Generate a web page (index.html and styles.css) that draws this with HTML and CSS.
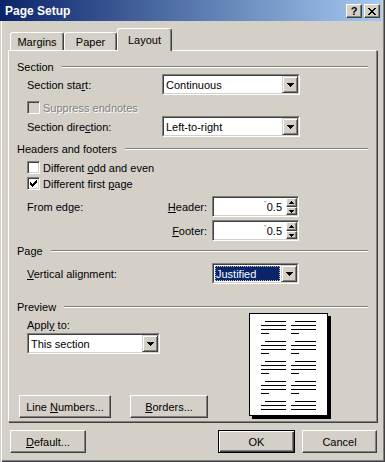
FILE: index.html
```html
<!DOCTYPE html>
<html lang="en">

<head>
    <meta charset="UTF-8">
    <meta name="viewport" content="width=device-width, initial-scale=1.0">
    <title>Page Setup</title>
    <link rel="stylesheet" href="styles.css">
</head>

<body>
    <div class="window">
        <div class="titlebar">
            <span class="title">Page Setup</span>
            <div class="cap-buttons">
                <span class="cap-btn">?</span>
                <span class="cap-btn">
                    <svg width="8" height="7" viewBox="0 0 8 7"><path d="M0 0h2v1H0zM6 0h2v1H6zM1 1h2v1H1zM5 1h2v1H5zM2 2h4v1H2zM3 3h2v1H3zM2 4h4v1H2zM1 5h2v1H1zM5 5h2v1H5zM0 6h2v1H0zM6 6h2v1H6z"/></svg>
                </span>
            </div>
        </div>

        <div class="main">
            <div class="tabs">
                <div class="tab tab-margins">Margins</div>
                <div class="tab tab-paper">Paper</div>
                <div class="tab tab-layout active">Layout</div>
            </div>

            <div class="panel">
                <!-- Section -->
                <div class="group-head"><span>Section</span><i class="etch"></i></div>
                <div class="field first">
                    <span class="lbl">Section sta<u>r</u>t:</span>
                    <div class="combo w138">
                        <div class="combo-in"><span class="val">Continuous</span><span class="drop"><svg width="7" height="4" viewBox="0 0 7 4"><path d="M0 0h7v1H0zM1 1h5v1H1zM2 2h3v1H2zM3 3h1v1H3z"/></svg></span></div>
                    </div>
                </div>
                <div class="check-row disabled suppress">
                    <span class="box"></span>
                    <span>Suppress endnotes</span>
                </div>
                <div class="field dir">
                    <span class="lbl">Section dire<u>c</u>tion:</span>
                    <div class="combo w138">
                        <div class="combo-in"><span class="val">Left-to-right</span><span class="drop"><svg width="7" height="4" viewBox="0 0 7 4"><path d="M0 0h7v1H0zM1 1h5v1H1zM2 2h3v1H2zM3 3h1v1H3z"/></svg></span></div>
                    </div>
                </div>

                <!-- Headers and footers -->
                <div class="group-head hf"><span>Headers and footers</span><i class="etch"></i></div>
                <div class="check-row odd">
                    <span class="box"></span>
                    <span>Different <u>o</u>dd and even</span>
                </div>
                <div class="check-row firstpage">
                    <span class="box"><svg width="7" height="7" viewBox="0 0 7 7"><path d="M0 2h1v3H0zM1 3h1v3H1zM2 4h1v3H2zM3 3h1v3H3zM4 2h1v3H4zM5 1h1v3H5zM6 0h1v3H6z"/></svg></span>
                    <span>Different first <u>p</u>age</span>
                </div>
                <div class="field edge">
                    <span class="lbl-edge">From edge:</span>
                    <span class="lbl-right"><u>H</u>eader:</span>
                    <div class="spin">
                        <span class="num"><i class="tick">"</i>0.5</span>
                        <span class="spin-btns">
                            <span class="spin-up"><svg width="5" height="3" viewBox="0 0 5 3"><path d="M2 0h1v1H2zM1 1h3v1H1zM0 2h5v1H0z"/></svg></span>
                            <span class="spin-down"><svg width="5" height="3" viewBox="0 0 5 3"><path d="M0 0h5v1H0zM1 1h3v1H1zM2 2h1v1H2z"/></svg></span>
                        </span>
                    </div>
                </div>
                <div class="field edge2">
                    <span class="lbl-edge"></span>
                    <span class="lbl-right"><u>F</u>ooter:</span>
                    <div class="spin">
                        <span class="num"><i class="tick">"</i>0.5</span>
                        <span class="spin-btns">
                            <span class="spin-up"><svg width="5" height="3" viewBox="0 0 5 3"><path d="M2 0h1v1H2zM1 1h3v1H1zM0 2h5v1H0z"/></svg></span>
                            <span class="spin-down"><svg width="5" height="3" viewBox="0 0 5 3"><path d="M0 0h5v1H0zM1 1h3v1H1zM2 2h1v1H2z"/></svg></span>
                        </span>
                    </div>
                </div>

                <!-- Page -->
                <div class="group-head pg"><span>Page</span><i class="etch"></i></div>
                <div class="field valign">
                    <span class="lbl lbl-wide"><u>V</u>ertical alignment:</span>
                    <div class="combo w87">
                        <div class="combo-in"><span class="val focus"><span class="sel">Justified</span></span><span class="drop"><svg width="7" height="4" viewBox="0 0 7 4"><path d="M0 0h7v1H0zM1 1h5v1H1zM2 2h3v1H2zM3 3h1v1H3z"/></svg></span></div>
                    </div>
                </div>

                <!-- Preview -->
                <div class="group-head pv"><span>Preview</span><i class="etch"></i></div>
                <div class="preview">
                    <div class="preview-left">
                        <span class="apply">Appl<u>y</u> to:</span>
                        <div class="combo w133">
                            <div class="combo-in"><span class="val">This section</span><span class="drop"><svg width="7" height="4" viewBox="0 0 7 4"><path d="M0 0h7v1H0zM1 1h5v1H1zM2 2h3v1H2zM3 3h1v1H3z"/></svg></span></div>
                        </div>
                        <div class="panel-buttons">
                            <span class="btn btn-lines"><span>Line <u>N</u>umbers...</span></span>
                            <span class="btn btn-borders"><span><u>B</u>orders...</span></span>
                        </div>
                    </div>
                    <svg class="page" width="82" height="106" viewBox="0 0 82 106">
                        <rect x="3" y="3" width="79" height="103" fill="#000"/>
                        <rect x="0.5" y="0.5" width="78" height="102" fill="#fff" stroke="#000"/>
                        <g fill="#000">
                            <path d="M16 8h21v1H16zM12 12h25v1H12zM12 16h25v1H12zM12 20h8v1H12z"/>
                            <path d="M46 8h21v1H46zM42 12h25v1H42zM42 16h25v1H42zM42 20h8v1H42z"/>
                            <path d="M16 28h21v1H16zM12 32h25v1H12zM12 36h25v1H12zM12 40h8v1H12z"/>
                            <path d="M46 28h21v1H46zM42 32h25v1H42zM42 36h25v1H42zM42 40h8v1H42z"/>
                            <path d="M16 48h21v1H16zM12 52h25v1H12zM12 56h25v1H12zM12 60h8v1H12z"/>
                            <path d="M46 48h21v1H46zM42 52h25v1H42zM42 56h25v1H42zM42 60h8v1H42z"/>
                            <path d="M16 68h21v1H16zM12 72h25v1H12zM12 76h25v1H12zM12 80h8v1H12z"/>
                            <path d="M46 68h21v1H46zM42 72h25v1H42zM42 76h25v1H42zM42 80h8v1H42z"/>
                            <path d="M16 88h21v1H16zM12 92h25v1H12zM12 96h25v1H12z"/>
                            <path d="M46 88h21v1H46zM42 92h25v1H42zM42 96h25v1H42z"/>
                        </g>
                    </svg>
                </div>
            </div>

            <div class="footer">
                <span class="btn btn-default"><span><u>D</u>efault...</span></span>
                <span class="btn btn-ok">OK</span>
                <span class="btn btn-cancel">Cancel</span>
            </div>
        </div>
    </div>
</body>

</html>
```

FILE: styles.css
```css
* {
    box-sizing: border-box;
}

body {
    margin: 0;
    background-color: #d4d0c8;
    font-family: "Liberation Sans", Arial, sans-serif;
    font-size: 11px;
    color: #000;
}

u {
    text-decoration: underline;
    text-underline-offset: 1px;
}

.window {
    width: 385px;
    height: 462px;
    background-color: #d4d0c8;
    display: flex;
    flex-direction: column;
    box-shadow: inset 1px 0 #d4d0c8, inset 2px 0 #fff, inset -1px -1px #404040, inset -2px -2px #808080;
}

/* title bar */
.titlebar {
    height: 21px;
    margin-right: 3px;
    padding: 1px 2px 0 5px;
    display: flex;
    align-items: center;
    justify-content: space-between;
    background: linear-gradient(to right, #0a246a, #a6caf0);
}

.title {
    color: #fff;
    font-weight: bold;
    font-size: 12px;
}

.cap-buttons {
    display: flex;
    gap: 2px;
}

.cap-btn {
    width: 16px;
    height: 14px;
    display: flex;
    align-items: center;
    justify-content: center;
    background-color: #d4d0c8;
    border: 1px solid;
    border-color: #fff #404040 #404040 #fff;
    box-shadow: inset -1px -1px #808080;
    font-weight: bold;
    font-size: 11px;
    line-height: 1;
}

/* main area */
.main {
    flex: 1;
    display: flex;
    flex-direction: column;
    padding: 7px 8px 0 8px;
}

.tabs {
    height: 22px;
    display: flex;
    align-items: flex-end;
    padding-left: 2px;
}

.tab {
    height: 18px;
    display: flex;
    align-items: center;
    justify-content: center;
    padding-top: 1px;
    border-top: 1px solid #fff;
    border-left: 1px solid #fff;
    border-right: 1px solid #404040;
    box-shadow: inset -1px 0 #808080;
    border-radius: 3px 3px 0 0;
}

.tab-margins {
    width: 54px;
}

.tab-paper {
    width: 53px;
}

.tab-layout {
    width: 55px;
}

.tab.active {
    height: 23px;
    margin-bottom: -1px;
    padding-top: 0;
    background-color: #d4d0c8;
    position: relative;
    z-index: 1;
}

.panel {
    border: 1px solid;
    border-color: #fff #808080 #808080 #fff;
    box-shadow: 1px 1px 0 #404040;
    padding: 9px 8px 3px 8px;
    display: flex;
    flex-direction: column;
}

/* group headings with etched line */
.group-head {
    height: 13px;
    display: flex;
    align-items: center;
}

.etch {
    flex: 1;
    height: 2px;
    margin-left: 8px;
    border-top: 1px solid #808080;
    border-bottom: 1px solid #fff;
}

.group-head.hf {
    margin-top: 5px;
}

.group-head.pg {
    margin-top: 3px;
}

.group-head.pv {
    margin-top: 16px;
}

.field {
    display: flex;
    align-items: center;
    padding-left: 10px;
}

.field.first {
    margin-top: 1px;
}

.field.dir {
    margin-top: 2px;
}

.field.edge {
    margin-top: 6px;
}

.field.edge2 {
    margin-top: 3px;
}

.field.valign {
    margin-top: 6px;
}

.lbl {
    width: 135px;
}

.lbl-wide {
    width: 185px;
}

.lbl-edge {
    width: 90px;
}

.lbl-right {
    width: 95px;
    text-align: right;
    padding-right: 5px;
}

/* combo boxes */
.combo {
    height: 21px;
    border: 1px solid;
    border-color: #808080 #fff #fff #808080;
    background-color: #fff;
    display: flex;
}

.combo-in {
    flex: 1;
    display: flex;
    border: 1px solid;
    border-color: #404040 #d4d0c8 #d4d0c8 #404040;
}

.w138 {
    width: 138px;
}

.w133 {
    width: 133px;
}

.w87 {
    width: 87px;
}

.val {
    flex: 1;
    display: flex;
    align-items: center;
    padding-left: 2px;
}

.val.focus {
    padding: 1px;
}

.sel {
    flex: 1;
    height: 100%;
    display: flex;
    align-items: center;
    padding-left: 1px;
    background-color: #0a246a;
    color: #fff;
    outline: 1px dotted #c0c0c0;
    outline-offset: -1px;
}

.drop {
    width: 16px;
    display: flex;
    align-items: center;
    justify-content: center;
    background-color: #d4d0c8;
    border: 1px solid;
    border-color: #d4d0c8 #404040 #404040 #d4d0c8;
    box-shadow: inset 1px 1px #fff, inset -1px -1px #808080;
}

/* check boxes */
.check-row {
    height: 13px;
    display: flex;
    align-items: center;
    gap: 3px;
    padding-left: 10px;
}

.check-row.suppress {
    margin-top: 6px;
}

.check-row.odd {
    margin-top: 6px;
}

.check-row.firstpage {
    margin-top: 3px;
}

.box {
    width: 13px;
    height: 13px;
    display: flex;
    align-items: center;
    justify-content: center;
    background-color: #fff;
    border: 1px solid;
    border-color: #808080 #fff #fff #808080;
    box-shadow: inset 1px 1px #404040, inset -1px -1px #d4d0c8;
}

.check-row.disabled {
    color: #808080;
    text-shadow: 1px 1px #fff;
}

.check-row.disabled .box {
    background-color: #d4d0c8;
}

/* spin boxes */
.spin {
    width: 87px;
    height: 21px;
    display: flex;
    background-color: #fff;
    border: 1px solid;
    border-color: #808080 #fff #fff #808080;
    box-shadow: inset 1px 1px #404040, inset -1px -1px #d4d0c8;
    padding: 1px;
}

.num {
    flex: 1;
    display: flex;
    align-items: center;
    justify-content: flex-end;
    padding-right: 4px;
}

.tick {
    font-style: normal;
    font-size: 8px;
    color: #909090;
    align-self: flex-start;
    margin-top: 1px;
}

.spin-btns {
    width: 11px;
    display: flex;
    flex-direction: column;
}

.spin-up,
.spin-down {
    display: flex;
    align-items: center;
    justify-content: center;
    background-color: #d4d0c8;
    border: 1px solid;
    border-color: #fff #404040 #404040 #fff;
    box-shadow: inset -1px -1px #808080;
}

.spin-up {
    height: 9px;
}

.spin-down {
    height: 8px;
}

/* preview */
.preview {
    height: 105px;
    display: flex;
}

.preview-left {
    width: 232px;
    display: flex;
    flex-direction: column;
}

.apply {
    height: 13px;
    margin-top: 6px;
    padding-left: 10px;
}

.preview-left .combo {
    margin-top: 1px;
    margin-left: 10px;
}

.panel-buttons {
    margin-top: auto;
    display: flex;
    gap: 19px;
    padding-left: 2px;
}

.page {
    display: block;
}

/* buttons */
.btn {
    height: 23px;
    display: flex;
    align-items: center;
    justify-content: center;
    background-color: #d4d0c8;
    border: 1px solid;
    border-color: #fff #404040 #404040 #fff;
    box-shadow: inset -1px -1px #808080;
}

.btn-lines {
    width: 92px;
}

.btn-borders {
    width: 78px;
}

.footer {
    margin-top: 8px;
    display: flex;
}

.btn-default {
    width: 76px;
    margin-left: 2px;
    margin-right: auto;
}

.btn-ok {
    width: 77px;
    border-color: #000;
    box-shadow: inset 1px 1px #fff, inset -1px -1px #404040, inset -2px -2px #808080;
}

.btn-cancel {
    width: 75px;
    margin-left: 7px;
}
```
